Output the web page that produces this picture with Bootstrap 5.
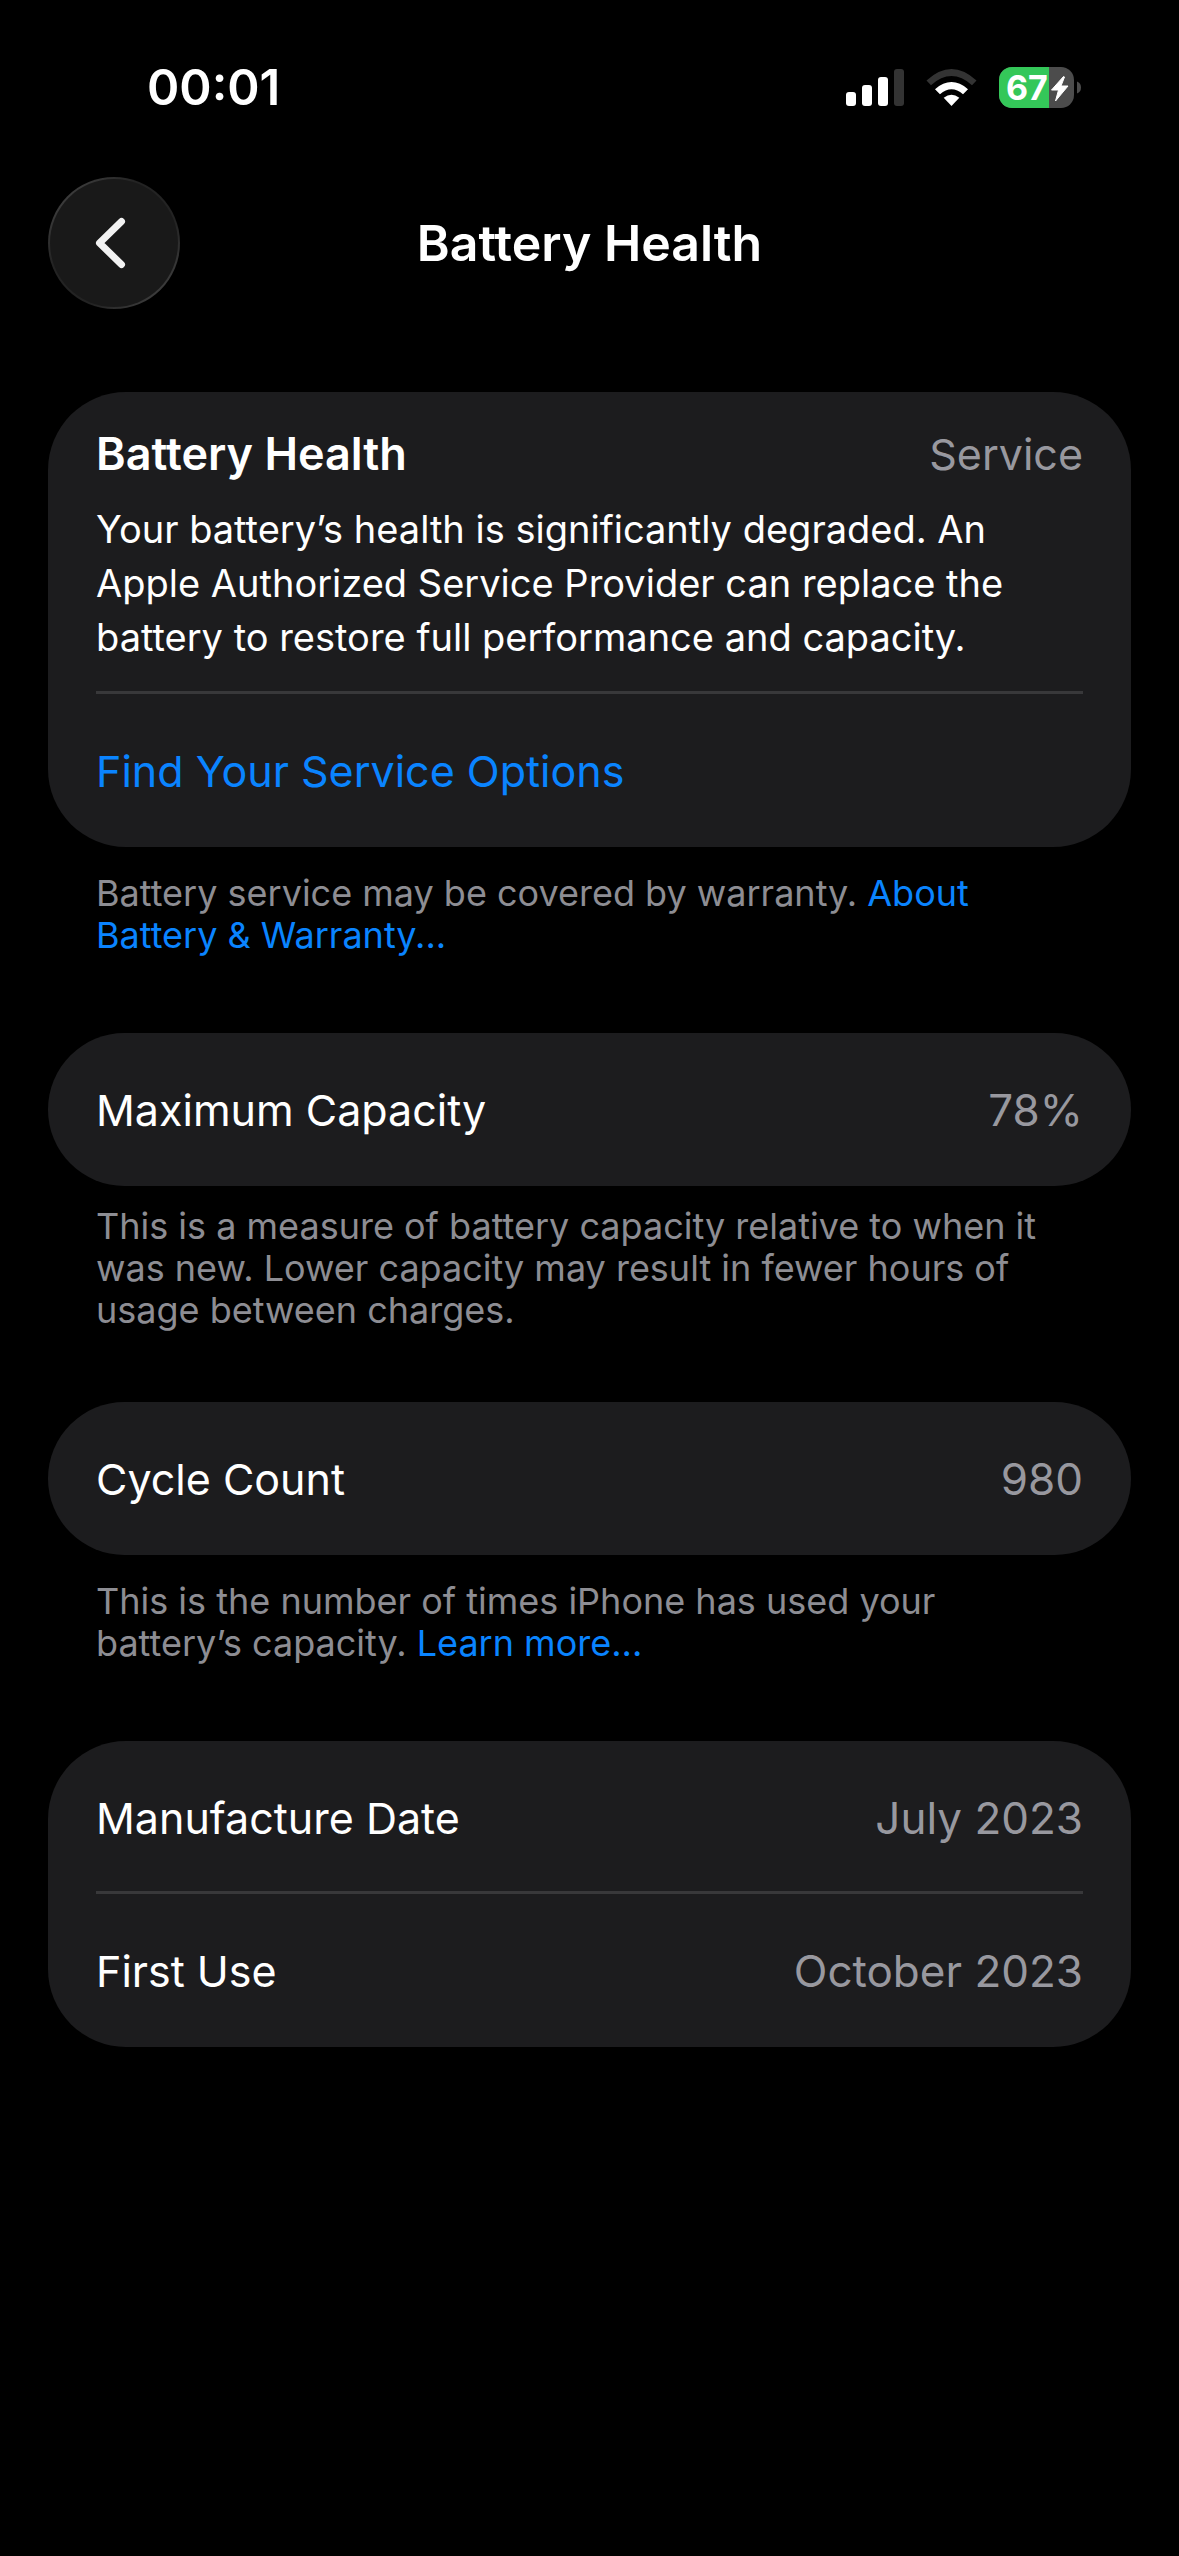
<!DOCTYPE html>
<html lang="en" data-bs-theme="dark">
<head>
<meta charset="utf-8">
<meta name="viewport" content="width=device-width, initial-scale=1">
<title>Battery Health</title>
<link href="https://cdn.jsdelivr.net/npm/bootstrap@5.3.0/dist/css/bootstrap.min.css" rel="stylesheet">
<style>
  body { background: #000; color: #fff; font-family: Inter, "Liberation Sans", sans-serif; min-height: 100vh; }
  a { color: #0a84ff; text-decoration: none; }
  .status-bar { height: 177px; padding: 66px 97px 0 147px; }
  .clock { font-size: 49px; line-height: 44px; font-weight: 600; }
  .status-icons { gap: 22px; height: 44px; }
  .battery-icon { width: 83px; height: 42px; }
  .battery-icon text { font: 700 34px Inter, "Liberation Sans", sans-serif; }
  .title-bar { display: grid; grid-template-columns: 132px 1fr 132px; margin: 0 48px 83px; }
  .title-bar h1 { font-size: 50px; line-height: 60px; font-weight: 600; }
  .back-btn { width: 132px; height: 132px; background: linear-gradient(#191919, #191919) padding-box, linear-gradient(135deg, #4c4c4c, #232323 35%, #232323 65%, #4c4c4c) border-box; border: 2px solid transparent; }
  .settings { padding: 0 48px; }
  .group-card { background: #1c1c1e; border-radius: 78px; padding: 0 48px; }
  .item { min-height: 153px; font-size: 43px; line-height: 54px; }
  .ruled { box-shadow: inset 0 -3px #38383a; }
  .health { padding: 35px 0 30px; }
  .health p { font-size: 38px; margin-top: 21px; }
  .health-title { font-size: 45px; }
  .value { color: #98989f; font-size: 44px; }
  .health .value { font-size: 43px; }
  .note { color: #8d8d93; font-size: 36px; line-height: 42px; padding: 25px 48px 77px; }
  .note-tight { padding-top: 19px; padding-bottom: 71px; }
</style>
<script src="https://cdn.jsdelivr.net/npm/bootstrap@5.3.0/dist/js/bootstrap.bundle.min.js" defer></script>
</head>
<body>
<div class="status-bar d-flex justify-content-between align-items-start">
  <time class="clock">00:01</time>
  <div class="status-icons d-flex align-items-center">
    <svg width="58" height="38" viewBox="0 0 58 38" role="img" aria-label="Signal">
      <g fill="#fff"><rect y="23" width="10" height="14" rx="3"/><rect x="16" y="16" width="10" height="21" rx="3"/><rect x="32" y="8" width="10" height="29" rx="3"/></g>
      <rect x="48" width="10" height="37" rx="3" fill="#333"/>
    </svg>
    <svg width="51" height="38" viewBox="0 0 51 38" role="img" aria-label="Wi-Fi">
      <path d="M0.500 11.500Q25.500-11.500 50.500 11.500L46 16.200Q25.500-2 5 16.200Z" fill="#333"/>
      <path d="M9 20.200Q25.500 6 42 20.200L37 25.200Q25.500 15.500 14 25.200Z" fill="#fff"/>
      <path d="M17.700 28.700Q25.500 23 33.300 28.700L25.500 37Z" fill="#fff"/>
    </svg>
    <svg class="battery-icon" viewBox="0 0 83 42" role="img" aria-label="Battery 67 percent, charging">
      <clipPath id="cell"><rect width="75" height="41" rx="13"/></clipPath>
      <g clip-path="url(#cell)"><rect width="75" height="41" fill="#4c4c4c"/><rect width="50" height="41" fill="#34c759"/></g>
      <path d="M78 14.500Q82 16 82 20.500T78 26.500Z" fill="#4c4c4c"/>
      <text x="7" y="33" fill="#fff">67</text>
      <path d="M64.500 9.500L52.500 23H59.500L56.500 34L69 19H62L65.500 10Z" fill="#fff" stroke="#fff" stroke-linejoin="round"/>
    </svg>
  </div>
</div>

<header class="title-bar align-items-center">
  <button type="button" class="back-btn btn rounded-circle p-0 d-flex align-items-center justify-content-center" aria-label="Back">
    <svg class="flex-shrink-0" width="132" height="132" viewBox="0 0 132 132" fill="none" stroke="#f2f2f2" stroke-width="7" stroke-linecap="round" stroke-linejoin="round" aria-hidden="true"><path d="M73.500 44.500L51.500 66L73.500 87.500"/></svg>
  </button>
  <h1 class="text-center m-0">Battery Health</h1>
</header>

<main class="settings">
  <section>
    <div class="group-card">
      <div class="item health ruled">
        <div class="d-flex justify-content-between"><span class="health-title fw-semibold">Battery Health</span><span class="value">Service</span></div>
        <p class="mb-0">Your battery’s health is significantly degraded. An Apple Authorized Service Provider can replace the battery to restore full performance and capacity.</p>
      </div>
      <div class="item d-flex align-items-center"><a href="#service">Find Your Service Options</a></div>
    </div>
    <p class="note m-0">Battery service may be covered by warranty. <a href="#warranty">About Battery &amp; Warranty...</a></p>
  </section>
  <section>
    <div class="group-card">
      <div class="item d-flex align-items-center justify-content-between"><span>Maximum Capacity</span><span class="value">78%</span></div>
    </div>
    <p class="note note-tight m-0">This is a measure of battery capacity relative to when it was new. Lower capacity may result in fewer hours of usage between charges.</p>
  </section>
  <section>
    <div class="group-card">
      <div class="item d-flex align-items-center justify-content-between"><span>Cycle Count</span><span class="value">980</span></div>
    </div>
    <p class="note m-0">This is the number of times iPhone has used your battery’s capacity. <a href="#cycles">Learn more...</a></p>
  </section>
  <section class="group-card">
    <div class="item ruled d-flex align-items-center justify-content-between"><span>Manufacture Date</span><span class="value">July 2023</span></div>
    <div class="item d-flex align-items-center justify-content-between"><span>First Use</span><span class="value">October 2023</span></div>
  </section>
</main>
</body>
</html>
